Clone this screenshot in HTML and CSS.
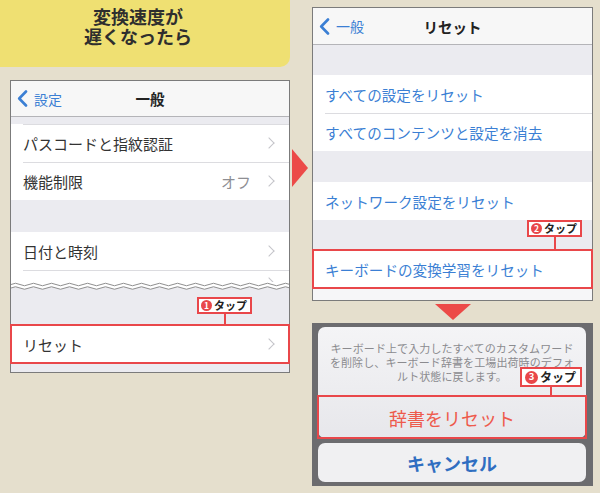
FILE: index.html
```html
<!DOCTYPE html>
<html lang="ja">
<head>
  <meta charset="UTF-8">
  <meta name="viewport" content="width=device-width, initial-scale=1.0">
  <title>変換速度が遅くなったら</title>
  <link rel="stylesheet" href="styles.css">
</head>
<body>
  <div class="page">
    <div class="col-left">
      <div class="title">変換速度が<br>遅くなったら</div>

      <div class="screen screen-general">
        <div class="nav">
          <span class="back">
            <svg width="11" height="17" viewBox="0 0 11 17"><polyline points="9,1.5 2.2,8.5 9,15.5" fill="none" stroke="#3b7fd4" stroke-width="2.6" stroke-linecap="round" stroke-linejoin="round"/></svg>
            設定
          </span>
          <span class="nav-title">一般</span>
        </div>
        <div class="gap gap-top"></div>
        <div class="row row-first"><span class="label">パスコードと指紋認証</span><span class="chev"></span></div>
        <div class="row"><span class="label">機能制限</span><span class="detail">オフ</span><span class="chev"></span></div>
        <div class="gap gap-section"></div>
        <div class="row"><span class="label">日付と時刻</span><span class="chev"></span></div>
        <div class="row row-cut"><span class="label">キーボード</span><span class="chev"></span></div>
        <svg class="wave" width="278" height="8">
          <defs>
            <pattern id="wave" width="18" height="8" patternUnits="userSpaceOnUse">
              <rect width="18" height="8" fill="#ebebf0"/>
              <path d="M0,0H18V6Q13.5,8.5 9,6Q4.5,3.5 0,6Z" fill="#fff"/>
              <path d="M0,2.5Q4.5,0 9,2.5T18,2.5" fill="none" stroke="#8f8f8f" stroke-width="1"/>
              <path d="M0,6Q4.5,3.5 9,6T18,6" fill="none" stroke="#8f8f8f" stroke-width="1"/>
            </pattern>
          </defs>
          <rect width="278" height="8" fill="url(#wave)"/>
        </svg>
        <div class="gap gap-cut"></div>
        <div class="row hl">
          <span class="label">リセット</span><span class="chev"></span>
          <span class="badge badge-1"><span class="num">1</span>タップ</span>
        </div>
        <div class="gap gap-end"></div>
      </div>
    </div>

    <div class="arrow-right"></div>

    <div class="col-right">
      <div class="screen screen-reset">
        <div class="nav nav-tall">
          <span class="back">
            <svg width="11" height="17" viewBox="0 0 11 17"><polyline points="9,1.5 2.2,8.5 9,15.5" fill="none" stroke="#3b7fd4" stroke-width="2.6" stroke-linecap="round" stroke-linejoin="round"/></svg>
            一般
          </span>
          <span class="nav-title">リセット</span>
        </div>
        <div class="gap gap-head"></div>
        <div class="row link"><span class="label">すべての設定をリセット</span></div>
        <div class="row link"><span class="label">すべてのコンテンツと設定を消去</span></div>
        <div class="gap gap-section2"></div>
        <div class="row link"><span class="label">ネットワーク設定をリセット</span></div>
        <div class="gap gap-head"></div>
        <div class="row link hl">
          <span class="label">キーボードの変換学習をリセット</span>
          <span class="badge badge-2"><span class="num">2</span>タップ</span>
        </div>
        <div class="gap gap-bottom"></div>
      </div>

      <div class="arrow-down"></div>

      <div class="sheet">
        <div class="alert">
          <p class="msg">キーボード上で入力したすべてのカスタムワード<br>を削除し、キーボード辞書を工場出荷時のデフォ<br>ルト状態に戻します。</p>
          <div class="sheet-btn hl">
            辞書をリセット
            <span class="badge badge-3"><span class="num">3</span>タップ</span>
          </div>
        </div>
        <div class="cancel">キャンセル</div>
      </div>
    </div>
  </div>
</body>
</html>
```

FILE: styles.css
```css
body {
  margin: 0;
  background-color: #e5dfcd;
  font-family: "Noto Sans CJK JP", "Noto Sans", sans-serif;
  color: #333;
}
.page {
  display: grid;
  grid-template-columns: 290px 22px 281px;
  width: 600px;
  height: 493px;
  overflow: hidden;
}

/* title */
.title {
  height: 67px;
  box-sizing: border-box;
  padding: 6px 14px 0 0;
  background-color: #efe072;
  border-bottom-right-radius: 10px;
  text-align: center;
  font-size: 18px;
  line-height: 20px;
  font-weight: bold;
  color: #2e2e2e;
}

/* phone screens */
.screen {
  position: relative;
  box-sizing: border-box;
  border: 1px solid #7b7b7b;
  background-color: #ebebf0;
}
.screen-general {
  width: 280px;
  margin: 13px 0 0 10px;
}
.screen-reset {
  width: 281px;
}
.nav {
  height: 35px;
  display: grid;
  grid-template-columns: 1fr auto 1fr;
  align-items: center;
  background-color: #f7f7f7;
  border-bottom: 1px solid #b4b4b8;
}
.nav-tall {
  height: 36px;
}
.back {
  justify-self: start;
  display: flex;
  align-items: center;
  gap: 6px;
  padding-left: 6px;
  font-size: 14px;
  color: #3b7fd4;
}
.back svg {
  display: block;
}
.nav-title {
  font-size: 14.5px;
  font-weight: bold;
  color: #222;
}

.gap-top { height: 7px; }
.gap-section { height: 32px; }
.gap-cut { height: 35px; }
.gap-end { height: 9px; }
.gap-head { height: 30px; }
.gap-section2 { height: 31px; }
.gap-bottom { height: 12px; background-color: #f6f6f8; }

.row {
  position: relative;
  height: 38px;
  display: flex;
  align-items: center;
  padding: 0 14px 0 12px;
  background-color: #fff;
  font-size: 15px;
}
.row + .row,
.row-first {
  background: linear-gradient(#dcdce0, #dcdce0) no-repeat 12px 0 / 100% 1px, #fff;
}
.row .label {
  flex: 1;
}
.row.link {
  font-size: 14.6px;
  color: #3b7fd4;
}
.detail {
  margin-right: 14px;
  color: #8e8e93;
}
.chev {
  width: 7px;
  height: 7px;
  margin-right: 2px;
  border-top: 1.5px solid #c4c4c9;
  border-right: 1.5px solid #c4c4c9;
  transform: rotate(45deg);
}
.row-cut {
  height: 12px;
  align-items: flex-start;
  padding-top: 9px;
  box-sizing: border-box;
  overflow: hidden;
}
.wave {
  display: block;
}

/* highlight + tap badges */
.hl {
  z-index: 2;
  outline: 2px solid #e9474a;
  outline-offset: -1px;
}
.badge {
  position: absolute;
  display: flex;
  align-items: center;
  gap: 2px;
  height: 17px;
  box-sizing: border-box;
  padding: 0 3px 0 2px;
  background-color: #fff;
  border: 2px solid #e9474a;
  font-size: 11px;
  font-weight: bold;
  line-height: 1;
  color: #222;
}
.badge::after {
  content: "";
  position: absolute;
  left: 50%;
  top: 100%;
  width: 2px;
  margin-left: -1px;
  height: var(--stem);
  background-color: #e9474a;
}
.num {
  width: 11px;
  height: 11px;
  display: flex;
  align-items: center;
  justify-content: center;
  border-radius: 50%;
  background-color: #e9474a;
  color: #fff;
  font-size: 8.5px;
}
.badge-1 { left: 186px; top: -28px; --stem: 13px; }
.badge-2 { left: 214px; top: -30px; --stem: 15px; }
.badge-3 {
  left: 202px;
  top: -30px;
  height: 20px;
  padding: 0 4px 0 3px;
  font-size: 12px;
  --stem: 12px;
}
.badge-3 .num {
  width: 13px;
  height: 13px;
  font-size: 9.5px;
}

/* arrows */
.arrow-right {
  width: 0;
  height: 0;
  margin: 149px 0 0 2px;
  border-left: 16px solid #ec4a47;
  border-top: 19px solid transparent;
  border-bottom: 19px solid transparent;
}
.col-right {
  display: flex;
  flex-direction: column;
  align-items: center;
  padding-top: 7px;
}
.arrow-down {
  width: 0;
  height: 0;
  margin-top: 3px;
  border-top: 16px solid #ec4a47;
  border-left: 18px solid transparent;
  border-right: 18px solid transparent;
}

/* action sheet */
.sheet {
  width: 281px;
  height: 163px;
  margin-top: 3px;
  box-sizing: border-box;
  padding: 4px 7px 4px 6px;
  background-color: #6c6c6f;
}
.alert {
  height: 111px;
  display: flex;
  flex-direction: column;
  border-radius: 7px;
  background: linear-gradient(#f4f4f6, #e7e7eb);
}
.msg {
  height: 69px;
  box-sizing: border-box;
  margin: 0;
  padding: 14px 6px 0;
  font-size: 11px;
  line-height: 14px;
  letter-spacing: 0.1px;
  white-space: nowrap;
  text-align: center;
  color: #8b8b8f;
}
.sheet-btn {
  position: relative;
  flex: 1;
  display: flex;
  align-items: center;
  justify-content: center;
  border-top: 1px solid #d2d2d6;
  font-size: 18px;
  color: #ee5a4c;
}
.cancel {
  height: 39px;
  margin-top: 5px;
  display: flex;
  align-items: center;
  justify-content: center;
  border-radius: 7px;
  background-color: #f0f0f2;
  font-size: 18px;
  font-weight: bold;
  color: #2f6ec1;
}
```
